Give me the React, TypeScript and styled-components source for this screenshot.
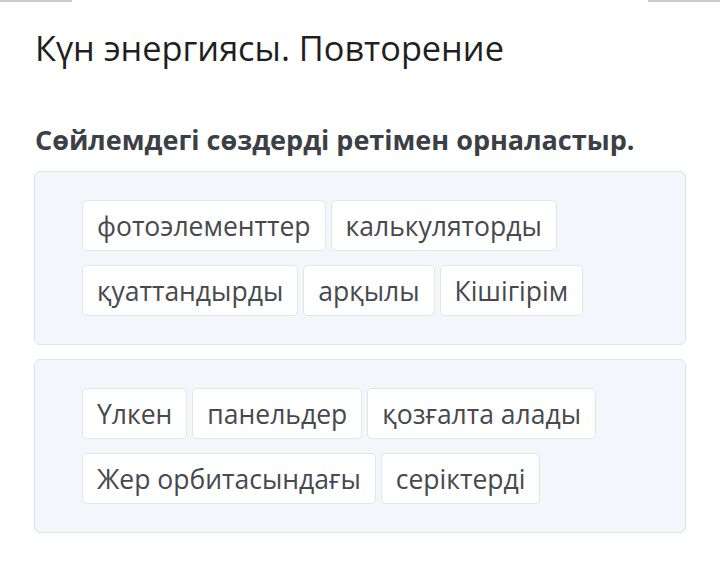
import React from "react";
import styled, { createGlobalStyle } from "styled-components";

const GlobalStyle = createGlobalStyle`
  html, body {
    margin: 0;
    padding: 0;
    background: #ffffff;
  }
  body {
    font-family: "Open Sans", "Noto Sans", "Liberation Sans", sans-serif;
  }
`;

const Page = styled.div`
  width: 720px;
  height: 574px;
  overflow: hidden;
  display: flex;
  flex-direction: column;
`;

const TabStrip = styled.div`
  display: flex;
  justify-content: space-between;
  height: 2px;
`;

const TabLine = styled.div`
  width: 72px;
  height: 2px;
  background: #c9cdd1;
`;

const Title = styled.h1`
  margin: 26px 0 0 35px;
  font-size: 34.3px;
  line-height: 40px;
  font-weight: 400;
  color: #1f1f1f;
`;

const Question = styled.h2`
  margin: 55px 0 0 35px;
  font-size: 27px;
  line-height: 34px;
  font-weight: 700;
  color: #3b4046;
`;

const Boxes = styled.div`
  display: flex;
  flex-direction: column;
  gap: 14px;
  margin: 14px 34px 0 34px;
`;

const WordBank = styled.div`
  display: flex;
  flex-wrap: wrap;
  align-content: flex-start;
  gap: 14px 5px;
  padding: 28px 47px;
  background: #f3f7fb;
  border: 1px solid #dde3e9;
  border-radius: 6px;
`;

const Chip = styled.div`
  display: flex;
  align-items: center;
  height: 51px;
  box-sizing: border-box;
  padding: 0 14px;
  background: #ffffff;
  border: 1px solid #e2e6eb;
  border-radius: 5px;
  font-size: 26.5px;
  color: #46494d;
  white-space: nowrap;
`;

const banks: string[][] = [
  ["фотоэлементтер", "калькуляторды", "қуаттандырды", "арқылы", "Кішігірім"],
  ["Үлкен", "панельдер", "қозғалта алады", "Жер орбитасындағы", "серіктерді"],
];

export default function App() {
  return (
    <Page>
      <GlobalStyle />
      <TabStrip>
        <TabLine />
        <TabLine />
      </TabStrip>
      <Title>Күн энергиясы. Повторение</Title>
      <Question>Сөйлемдегі сөздерді ретімен орналастыр.</Question>
      <Boxes>
        {banks.map((words, i) => (
          <WordBank key={i}>
            {words.map((w) => (
              <Chip key={w}>{w}</Chip>
            ))}
          </WordBank>
        ))}
      </Boxes>
    </Page>
  );
}
